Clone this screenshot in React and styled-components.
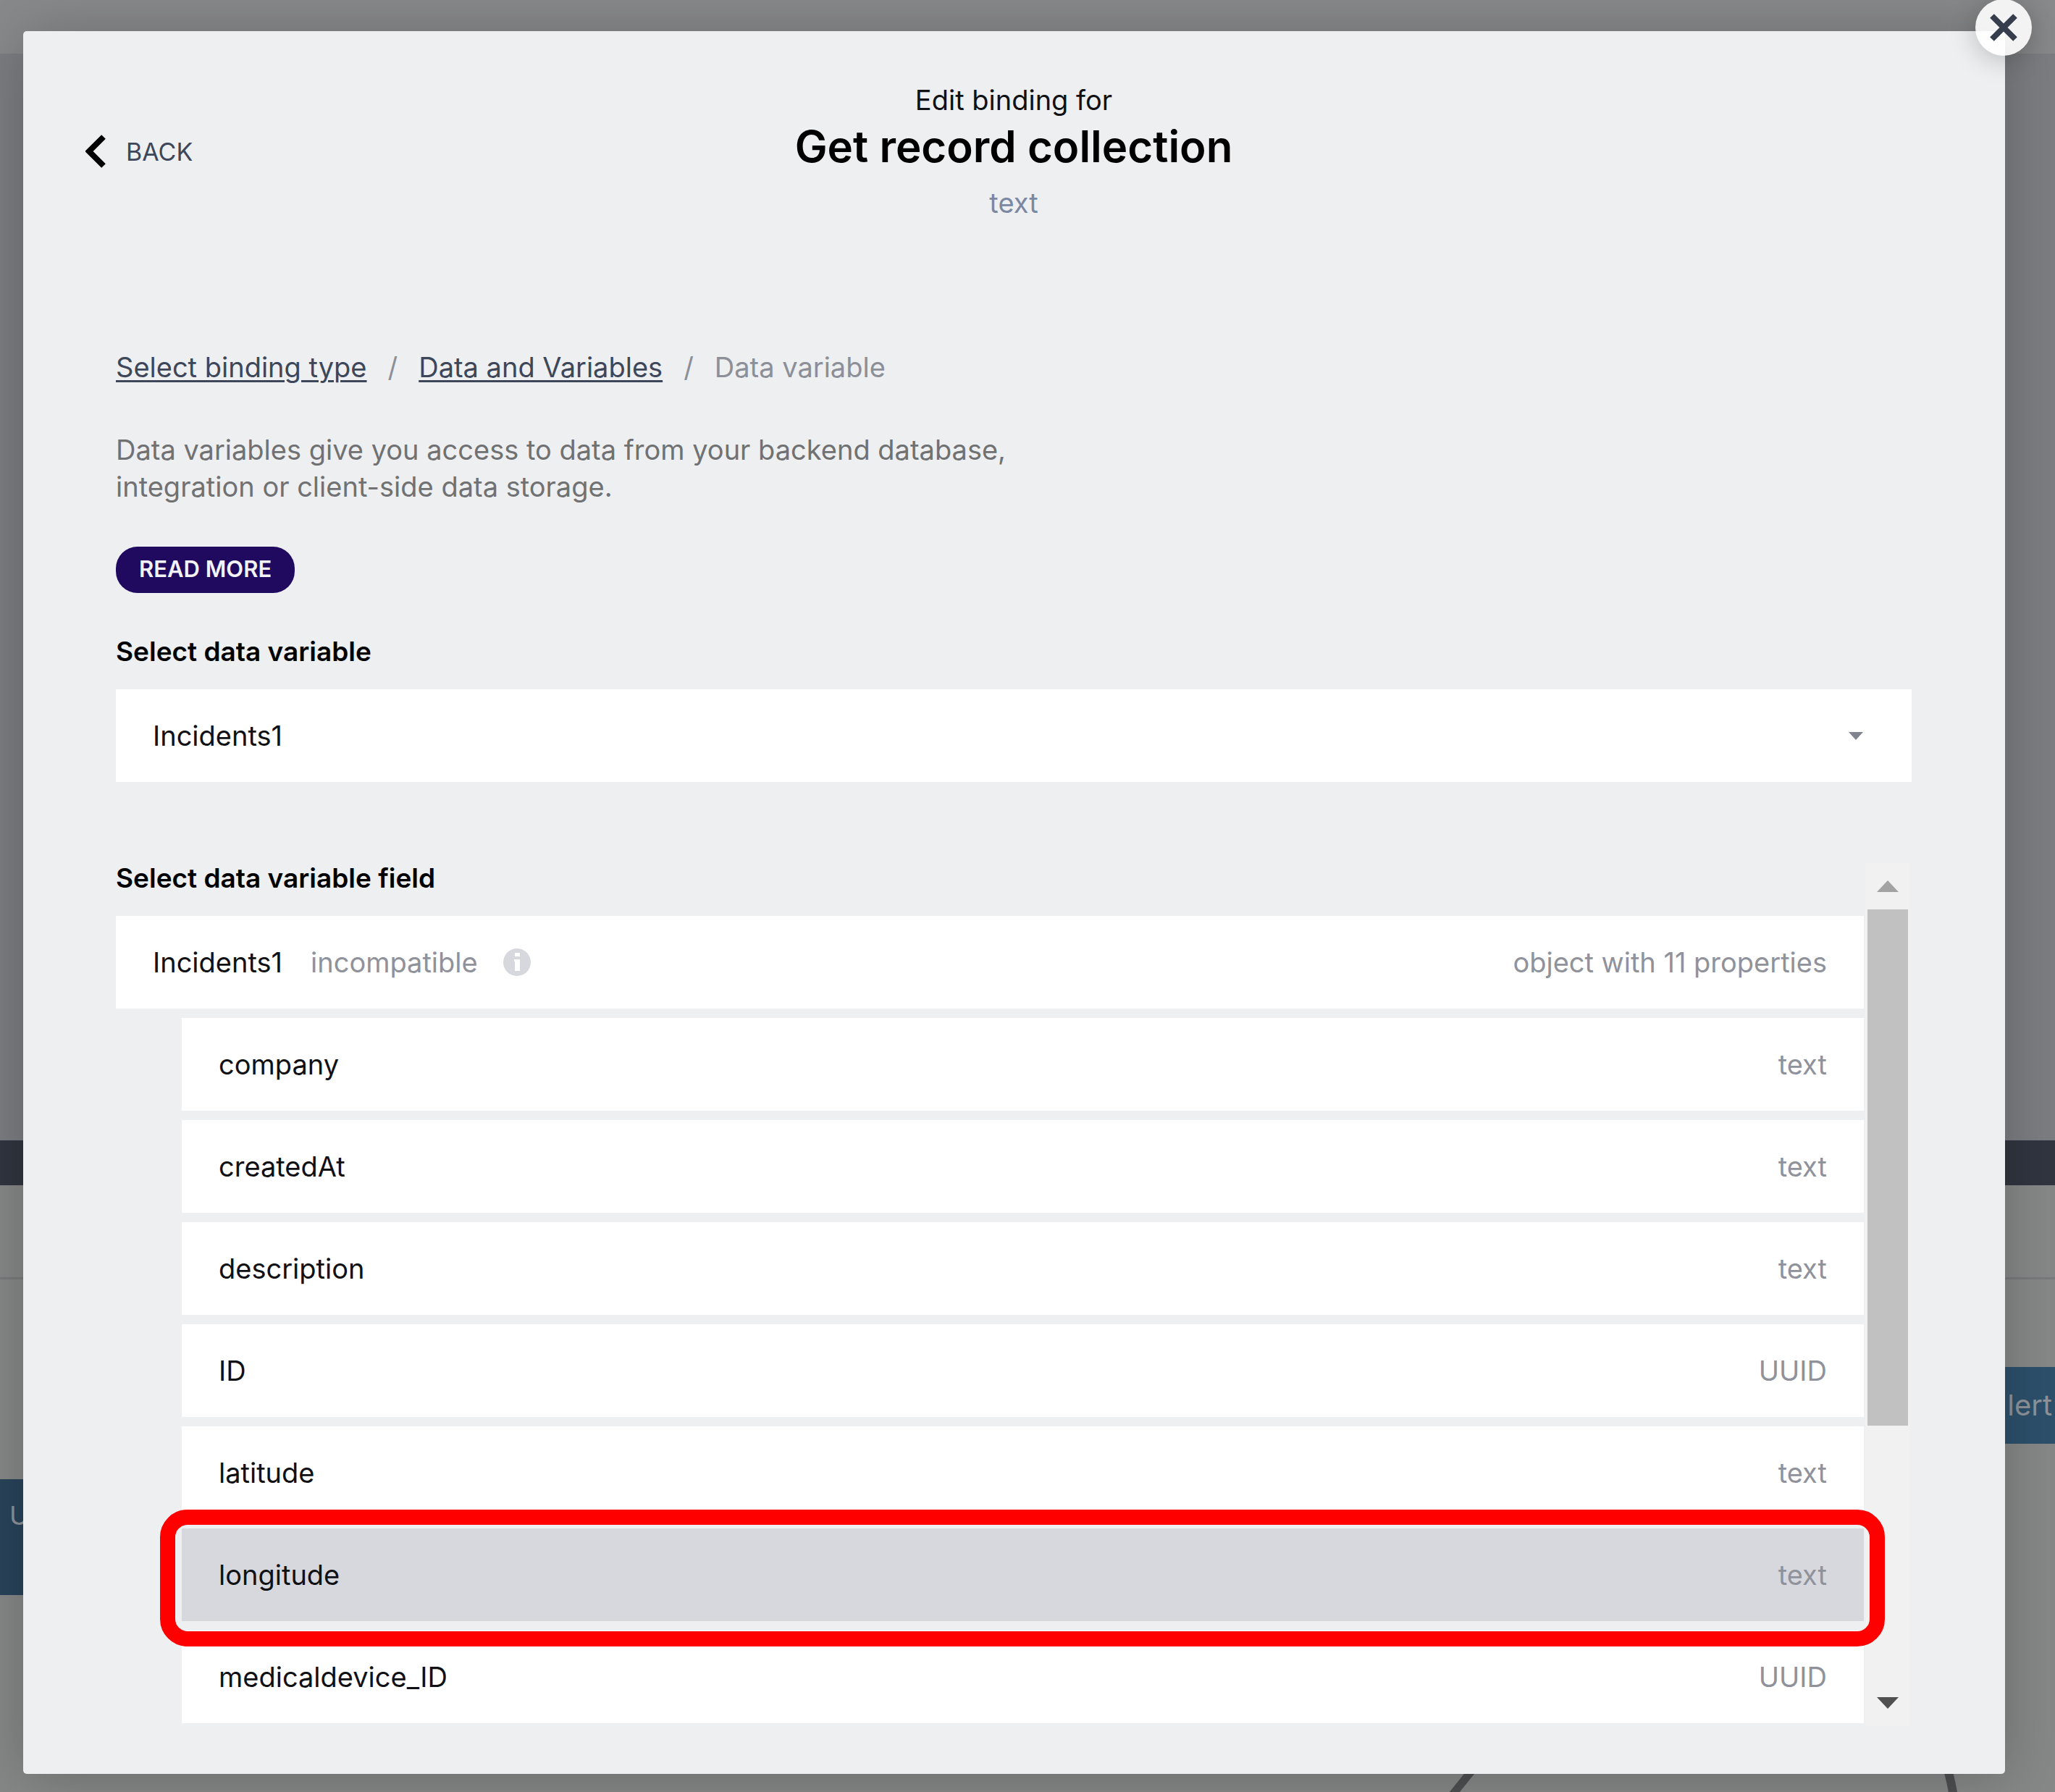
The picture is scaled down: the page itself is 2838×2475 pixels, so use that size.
import React, { useState } from "react";
import styled, { createGlobalStyle } from "styled-components";

const GlobalStyle = createGlobalStyle`
  *, *::before, *::after { box-sizing: border-box; }
  body { margin: 0; background: #868787; }
  body, button, select { font-family: Inter, "Liberation Sans", sans-serif; }
  button, select { margin: 0; padding: 0; border: 0; border-radius: 0; background: none; color: inherit; font-size: inherit; cursor: pointer; }
`;

const Page = styled.div`
  display: grid;
  min-height: 100vh;
  overflow: hidden;
  font-size: 38px;
  line-height: 48px;
  color: #101114;
`;

/* Dimmed editor behind the dialog */

const Editor = styled.div`
  grid-area: 1 / 1;
  display: flex;
  flex-direction: column;
`;

const EditorHeader = styled.div`
  height: 74px;
  background: #88898a;
`;

const EditorCanvas = styled.div`
  height: 1501px;
  background: #7c7d80;
`;

const EditorDivider = styled.div`
  height: 62px;
  background: #30353f;
`;

const EditorTabs = styled.div`
  height: 130px;
  background: #868787;
  border-bottom: 3px solid #797a7b;
`;

const LogicCanvas = styled.div`
  position: relative;
  flex: 1;
  background: #868787;
`;

const LogicNode = styled.div`
  position: absolute;
  display: flex;
  width: 300px;
  color: #8f9398;
`;

const SourceNode = styled(LogicNode)`
  top: 276px;
  left: -200px;
  height: 160px;
  padding: 26px 0 0 213px;
  font-size: 36px;
  line-height: 48px;
  background: #29435a;
`;

const AlertNode = styled(LogicNode)`
  top: 121px;
  right: 0;
  height: 106px;
  align-items: center;
  justify-content: flex-end;
  padding-right: 4px;
  font-size: 40px;
  background: #2d506b;
`;

const Connections = styled.svg`
  position: absolute;
  right: 130px;
  bottom: 0;
`;

/* Dialog */

const Overlay = styled.div`
  grid-area: 1 / 1;
  z-index: 1;
  padding: 43px 69px 24px 32px;
`;

const Dialog = styled.section`
  position: relative;
  padding: 71px 129px 70px 128px;
  background: #eeeff1;
  border-radius: 5px;
  box-shadow: 0 4px 80px rgba(0, 0, 0, 0.22);
`;

const CloseButton = styled.button`
  position: absolute;
  top: -44px;
  right: -37px;
  display: grid;
  place-items: center;
  width: 78px;
  height: 78px;
  border-radius: 50%;
  background: rgba(255, 255, 255, 0.9);
  box-shadow: 0 6px 36px rgba(0, 0, 0, 0.22);
`;

const Header = styled.header`
  display: grid;
  grid-template-columns: 1fr auto 1fr;
  align-items: center;
  margin: 0 -42px 179px;
`;

const BackButton = styled.button`
  display: flex;
  align-items: center;
  justify-self: start;
  gap: 27px;
  font-size: 34px;
  color: #3d4759;
`;

const Heading = styled.div`
  text-align: center;
`;

const Title = styled.h1`
  margin: 0;
  font-size: 60px;
  line-height: 80px;
  font-weight: 600;
  color: #000;
`;

const Line = styled.p`
  margin: 0;
`;

const BindingType = styled(Line)`
  margin-top: 14px;
  color: #7b88a3;
`;

const Breadcrumb = styled.nav`
  display: flex;
  gap: 29px;
  margin-bottom: 65px;
  color: #8c8f98;
`;

const Crumb = styled.a`
  color: #3d4759;
  text-decoration: underline;
  text-decoration-thickness: 3px;
  text-underline-offset: 4px;
`;

const Description = styled.p`
  max-width: 1300px;
  margin: 0 0 57px;
  line-height: 51px;
  color: #707173;
`;

const ReadMore = styled.button`
  display: block;
  height: 64px;
  margin-bottom: 60px;
  padding: 0 32px 4px;
  border-radius: 30px;
  background: #1f0a60;
  color: #f3f2f7;
  font-size: 31px;
  font-weight: 600;
`;

const FieldLabel = styled.label`
  display: block;
  margin: 0 0 31px;
  font-size: 37px;
  line-height: 42px;
  font-weight: 600;
  color: #000;
`;

const SelectBox = styled.div`
  display: grid;
  align-items: center;
  margin-bottom: 112px;
  background: #fff;

  > * { grid-area: 1 / 1; }
  > svg { justify-self: end; margin-right: 67px; pointer-events: none; }
`;

const Select = styled.select`
  appearance: none;
  width: 100%;
  height: 128px;
  padding: 0 51px;
`;

const ScrollArea = styled.div`
  display: flex;
  gap: 2px;
  padding-right: 2px;
`;

const FieldPicker = styled.div`
  flex: 1;
  min-width: 0;
`;

const FieldList = styled.div`
  display: flex;
  flex-direction: column;
  gap: 13px;
`;

const FieldRow = styled.button`
  position: relative;
  z-index: ${(p) => (p.$selected ? 1 : 0)};
  display: flex;
  align-items: center;
  height: 128px;
  margin-left: ${(p) => (p.$nested ? "91px" : "0")};
  padding: 0 51px;
  background: ${(p) => (p.$selected ? "#d7d8dd" : "#fff")};
  text-align: left;
`;

const FieldNote = styled.span`
  margin: 0 34px 0 39px;
  color: #8f929b;
`;

const FieldType = styled.span`
  margin-left: auto;
  color: #8f929b;
`;

const Highlight = styled.span`
  position: absolute;
  inset: -26px -29px -35px -30px;
  border: 21px solid #fe0000;
  border-radius: 38px;
  pointer-events: none;
`;

const Scrollbar = styled.div`
  display: flex;
  flex-direction: column;
  width: 62px;
  margin-bottom: -4px;
  background: #f1f1f1;
`;

const ScrollButton = styled.button`
  display: grid;
  place-items: center;
  height: 64px;
`;

const ScrollTrack = styled.div`
  flex: 1;
  padding: 0 3px;
`;

const ScrollThumb = styled.div`
  height: 67%;
  background: #c1c1c1;
`;

const Triangle = ({ width, height, color, up }) => (
  <svg width={width} height={height} viewBox="0 0 30 15" preserveAspectRatio="none" aria-hidden="true">
    <path d={up ? "M0 15 15 0 30 15Z" : "M0 0H30L15 15Z"} fill={color} />
  </svg>
);

const fields = [
  { name: "company", type: "text" },
  { name: "createdAt", type: "text" },
  { name: "description", type: "text" },
  { name: "ID", type: "UUID" },
  { name: "latitude", type: "text" },
  { name: "longitude", type: "text" },
  { name: "medicaldevice_ID", type: "UUID" },
];

export default function App() {
  const [selected, setSelected] = useState("longitude");

  return (
    <Page>
      <GlobalStyle />
      <Editor aria-hidden="true">
        <EditorHeader />
        <EditorCanvas />
        <EditorDivider />
        <EditorTabs />
        <LogicCanvas>
          <SourceNode>U</SourceNode>
          <AlertNode>lert</AlertNode>
          <Connections width="720" height="60" fill="none" stroke="#4e4f51">
            <path d="M58 14 41 35 16 66" strokeWidth="11" />
            <path d="M697 14Q705 36 710 66" strokeWidth="12" />
          </Connections>
        </LogicCanvas>
      </Editor>

      <Overlay>
        <Dialog role="dialog" aria-labelledby="dialog-title">
          <Header>
            <BackButton type="button">
              <svg width="29" height="46" viewBox="0 0 29 46" fill="none" aria-hidden="true">
                <path d="M25 3 5 23 25 43" stroke="#000" strokeWidth="8" />
              </svg>
              BACK
            </BackButton>
            <Heading>
              <Line>Edit binding for</Line>
              <Title id="dialog-title">Get record collection</Title>
              <BindingType>text</BindingType>
            </Heading>
          </Header>

          <Breadcrumb aria-label="Breadcrumb">
            <Crumb href="#binding-type">Select binding type</Crumb>
            <span>/</span>
            <Crumb href="#data-and-variables">Data and Variables</Crumb>
            <span>/</span>
            <span>Data variable</span>
          </Breadcrumb>

          <Description>
            Data variables give you access to data from your backend database, integration or client-side data storage.
          </Description>
          <ReadMore type="button">READ MORE</ReadMore>

          <FieldLabel htmlFor="data-variable">Select data variable</FieldLabel>
          <SelectBox>
            <Select id="data-variable" defaultValue="Incidents1">
              <option>Incidents1</option>
            </Select>
            <Triangle width={20} height={11} color="#80848e" />
          </SelectBox>

          <ScrollArea>
            <FieldPicker>
              <FieldLabel as="h2" id="field-label">Select data variable field</FieldLabel>
              <FieldList role="group" aria-labelledby="field-label">
                <FieldRow type="button">
                  Incidents1
                  <FieldNote>incompatible</FieldNote>
                  <svg width="40" height="40" viewBox="0 0 40 40" aria-hidden="true">
                    <circle cx="20" cy="20" r="19" fill="#d7d8dd" />
                    <path d="M17 7h7v5h-7zM16 16h8v16h-7V19h-1z" fill="#fff" />
                  </svg>
                  <FieldType>object with 11 properties</FieldType>
                </FieldRow>
                {fields.map(({ name, type }) => (
                  <FieldRow
                    key={name}
                    type="button"
                    $nested
                    $selected={name === selected}
                    aria-pressed={name === selected}
                    onClick={() => setSelected(name)}
                  >
                    {name}
                    <FieldType>{type}</FieldType>
                    {name === selected && <Highlight />}
                  </FieldRow>
                ))}
              </FieldList>
            </FieldPicker>
            <Scrollbar>
              <ScrollButton type="button" aria-label="Scroll up">
                <Triangle width={30} height={16} color="#a3a3a3" up />
              </ScrollButton>
              <ScrollTrack>
                <ScrollThumb />
              </ScrollTrack>
              <ScrollButton type="button" aria-label="Scroll down">
                <Triangle width={30} height={16} color="#505050" />
              </ScrollButton>
            </Scrollbar>
          </ScrollArea>

          <CloseButton type="button" aria-label="Close">
            <svg width="42" height="42" viewBox="0 0 42 42" fill="none" aria-hidden="true">
              <path d="M5 5 37 37M37 5 5 37" stroke="#363e4e" strokeWidth="8" />
            </svg>
          </CloseButton>
        </Dialog>
      </Overlay>
    </Page>
  );
}
